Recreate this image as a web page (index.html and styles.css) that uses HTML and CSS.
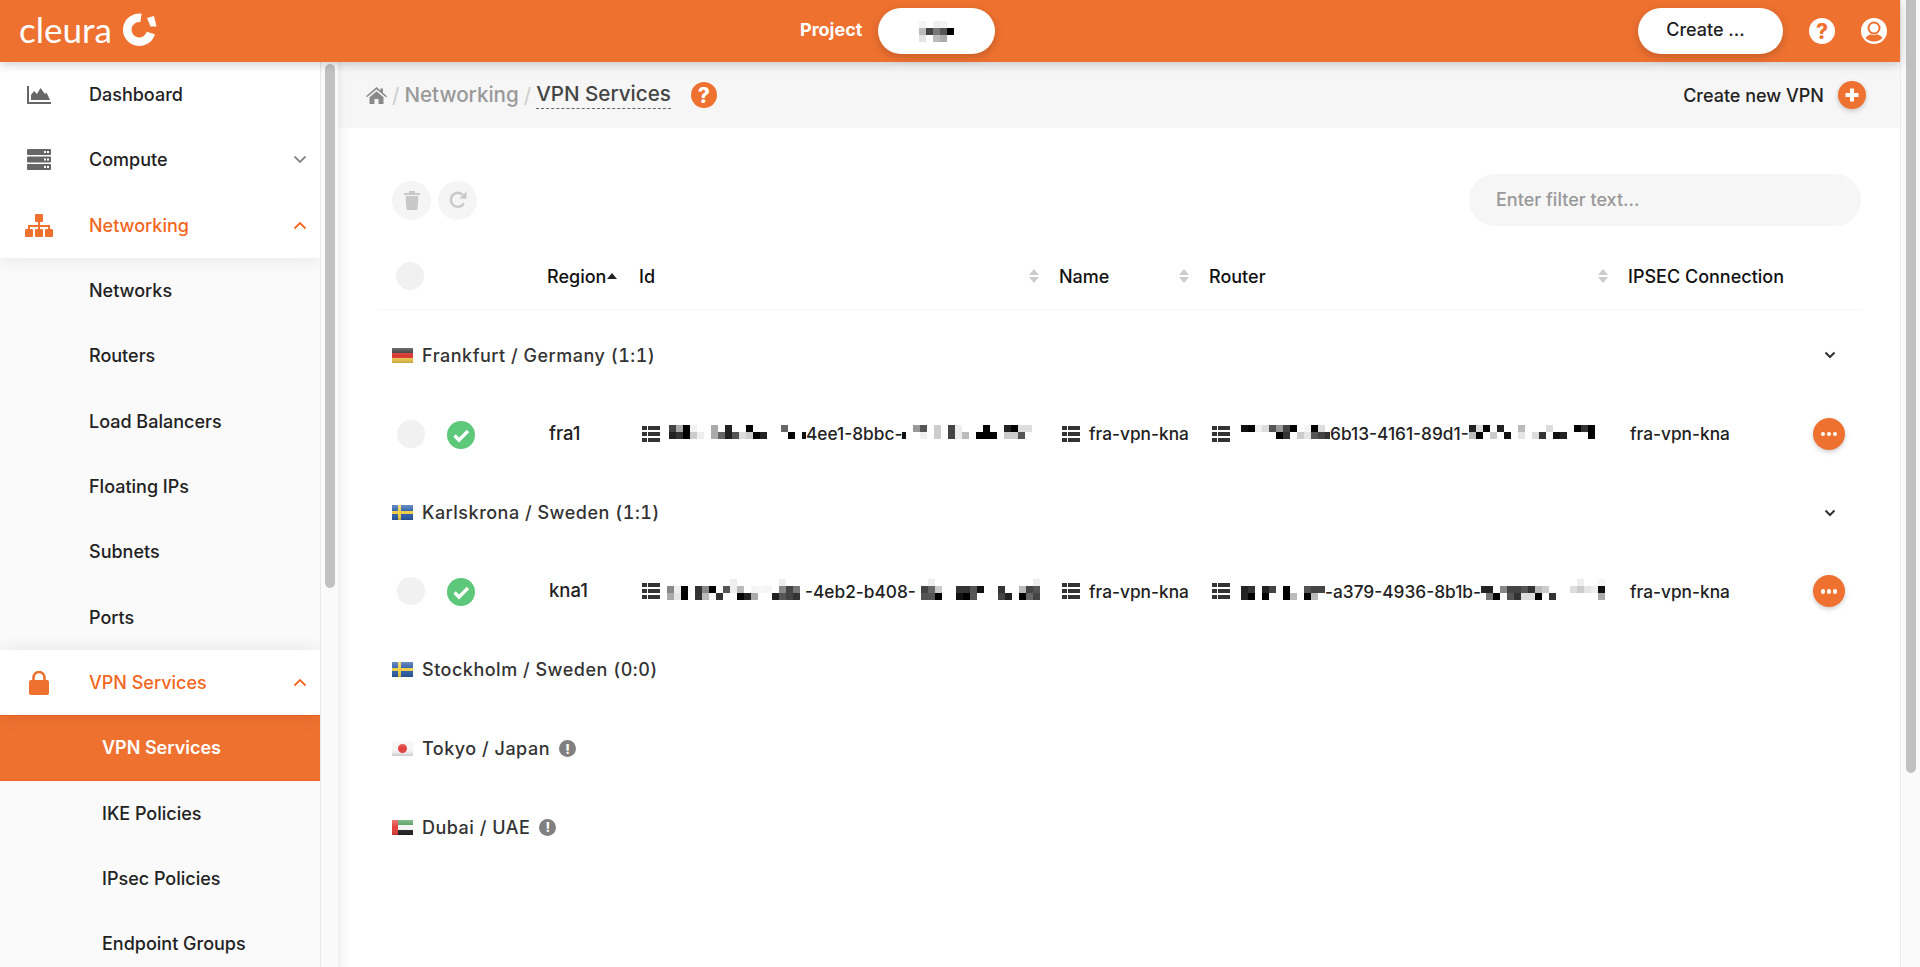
FILE: index.html
```html
<!DOCTYPE html>
<html>
<head>
    <title>Cleura - VPN Services</title>
    <meta charset="UTF-8">
    <link rel="stylesheet" href="styles.css">
</head>
<body>
<div class="page">
    <div class="app">
        <header class="topbar">
            <div class="brand">
                <span class="brand-name">cleura</span>
                <svg class="brand-mark" width="36" height="36" viewBox="0 0 36 36">
                    <path d="M20 5.900A12 12 0 1 0 29.800 21" fill="none" stroke="#fff" stroke-width="8.500"/>
                    <path d="M26 6L33 4L35.500 14.500L29.500 14.500Z" fill="#fff"/>
                </svg>
            </div>
            <div class="project">
                <span class="project-label">Project</span>
                <div class="pill project-pill">
                    <svg class="mosaic-small" width="35" height="21" viewBox="0 0 35 21">
                        <rect x="0" y="0" width="7" height="7" fill="#f4f4f4"/><rect x="14" y="0" width="7" height="7" fill="#f0f0f0"/><rect x="21" y="0" width="7" height="7" fill="#f4f4f4"/>
                        <rect x="0" y="7" width="7" height="7" fill="#bbb"/><rect x="7" y="7" width="7" height="7" fill="#444"/><rect x="14" y="7" width="7" height="7" fill="#777"/><rect x="21" y="7" width="7" height="7" fill="#555"/><rect x="28" y="7" width="7" height="7" fill="#000"/>
                        <rect x="0" y="14" width="7" height="7" fill="#e4e4e4"/><rect x="14" y="14" width="7" height="7" fill="#bbb"/><rect x="21" y="14" width="7" height="7" fill="#aaa"/>
                    </svg>
                </div>
            </div>
            <div class="topbar-right">
                <div class="pill create-pill"><span>Create ...</span></div>
                <span class="round-help light">?</span>
                <svg class="user-icon" width="26" height="26" viewBox="0 0 26 26">
                    <circle cx="13" cy="13" r="13" fill="#fff"/>
                    <circle cx="13" cy="10" r="5.500" fill="none" stroke="#ee7130" stroke-width="2"/>
                    <path d="M4.500 20C7 16.800 9.500 16.500 10.500 16.500C12 17.500 14 17.500 15.500 16.500C16.500 16.500 19 16.800 21.500 20C19.500 22 16.500 23.500 13 23.500C9.500 23.500 6.500 22 4.500 20Z" fill="#ee7130"/>
                </svg>
            </div>
        </header>

        <div class="layout">
            <aside class="sidebar">
                <div class="nav-group">
                    <a class="nav-item">
                        <span class="nav-icon">
                            <svg width="24" height="18" viewBox="0 0 24 18" fill="#666"><path d="M0 0h2v16h22v2H0z"/><path d="M4 14V9l3-4 3 3 3.500-6 4.500 6 1.500-1.500L23 14z"/></svg>
                        </span>
                        <span>Dashboard</span>
                    </a>
                    <a class="nav-item">
                        <span class="nav-icon">
                            <svg width="24" height="21" viewBox="0 0 24 21" fill="#666">
                                <path fill-rule="evenodd" d="M1 0h22a1 1 0 0 1 1 1v4a1 1 0 0 1-1 1H1a1 1 0 0 1-1-1V1a1 1 0 0 1 1-1zm16 2v2h2V2zm3 0v2h2V2zM1 7.500h22a1 1 0 0 1 1 1v4a1 1 0 0 1-1 1H1a1 1 0 0 1-1-1v-4a1 1 0 0 1 1-1zm16 2v2h2v-2zm3 0v2h2v-2zM1 15h22a1 1 0 0 1 1 1v4a1 1 0 0 1-1 1H1a1 1 0 0 1-1-1v-4a1 1 0 0 1 1-1zm16 2v2h2v-2zm3 0v2h2v-2z"/>
                            </svg>
                        </span>
                        <span>Compute</span>
                        <svg class="nav-chevron" width="14" height="9" viewBox="0 0 14 9"><path d="M1.500 1.500L7 7l5.500-5.500" fill="none" stroke="#888" stroke-width="1.800"/></svg>
                    </a>
                    <a class="nav-item open">
                        <span class="nav-icon">
                            <svg width="28" height="23" viewBox="0 0 28 23" fill="#ee7130">
                                <rect x="10" y="0" width="8" height="8" rx="1"/><rect x="0" y="15" width="8" height="8" rx="1"/><rect x="10" y="15" width="8" height="8" rx="1"/><rect x="20" y="15" width="8" height="8" rx="1"/>
                                <path d="M13 8h2v3h10v4h-2v-2h-8v2h-2v-2H5v2H3v-4h10z"/>
                            </svg>
                        </span>
                        <span>Networking</span>
                        <svg class="nav-chevron" width="14" height="9" viewBox="0 0 14 9"><path d="M1.500 7.500L7 2l5.500 5.500" fill="none" stroke="#f2671d" stroke-width="1.800"/></svg>
                    </a>
                </div>
                <a class="nav-sub">Networks</a>
                <a class="nav-sub">Routers</a>
                <a class="nav-sub">Load Balancers</a>
                <a class="nav-sub">Floating IPs</a>
                <a class="nav-sub">Subnets</a>
                <a class="nav-sub">Ports</a>
                <div class="nav-group">
                    <a class="nav-item open">
                        <span class="nav-icon">
                            <svg width="20" height="24" viewBox="0 0 20 24" fill="#ee7130">
                                <path d="M4.500 10V6.500a5.500 5.500 0 0 1 11 0V10" fill="none" stroke="#ee7130" stroke-width="2.600"/>
                                <rect x="0" y="9" width="20" height="15" rx="2"/>
                            </svg>
                        </span>
                        <span>VPN Services</span>
                        <svg class="nav-chevron" width="14" height="9" viewBox="0 0 14 9"><path d="M1.500 7.500L7 2l5.500 5.500" fill="none" stroke="#f2671d" stroke-width="1.800"/></svg>
                    </a>
                </div>
                <a class="nav-sub deep active">VPN Services</a>
                <a class="nav-sub deep">IKE Policies</a>
                <a class="nav-sub deep">IPsec Policies</a>
                <a class="nav-sub deep">Endpoint Groups</a>
            </aside>
            <div class="sidebar-track"><div class="sidebar-thumb"></div></div>

            <main class="main">
                <div class="crumbbar">
                    <svg class="home-icon" width="21" height="17" viewBox="0 0 21 17" fill="#8a8a8a">
                        <path d="M10.500 0L14.500 3.500V1.500H17V5.700L21 9.200L20 10.300L10.500 2.200L1 10.300L0 9.200Z"/>
                        <path d="M3.500 10.300L10.500 4.300L17.500 10.300V17H12.500V12H8.500V17H3.500Z"/>
                    </svg>
                    <span class="crumb-sep">/</span>
                    <span class="crumb">Networking</span>
                    <span class="crumb-sep">/</span>
                    <span class="crumb current">VPN Services</span>
                    <span class="round-help orange">?</span>
                    <div class="crumb-action">
                        <span>Create new VPN</span>
                        <span class="plus-button">
                            <svg width="16" height="16" viewBox="0 0 16 16"><path d="M8 1.500v13M1.500 8h13" stroke="#fff" stroke-width="4"/></svg>
                        </span>
                    </div>
                </div>

                <div class="content">
                    <div class="toolbar">
                        <div class="tool-buttons">
                            <span class="tool-button">
                                <svg width="16" height="19" viewBox="0 0 16 19" fill="#c8c8c8"><path d="M0 2h5V0h6v2h5v2H0z"/><path d="M1.500 5h13l-1 13a1 1 0 0 1-1 1h-9a1 1 0 0 1-1-1z"/></svg>
                            </span>
                            <span class="tool-button">
                                <svg width="18" height="18" viewBox="0 0 18 18"><path d="M14.800 12.500A7 7 0 1 1 14 4" fill="none" stroke="#c8c8c8" stroke-width="2.400"/><path d="M17.500 0.500V7.500H10.500Z" fill="#c8c8c8"/></svg>
                            </span>
                        </div>
                        <input class="filter" type="text" placeholder="Enter filter text...">
                    </div>

                    <div class="table-row table-head">
                        <div class="cell-check"><span class="check-dot"></span></div>
                        <div class="head-region">Region<i class="caret-up"></i></div>
                        <div class="head-cell">Id<i class="sorter"></i></div>
                        <div class="head-cell">Name<i class="sorter"></i></div>
                        <div class="head-cell">Router<i class="sorter"></i></div>
                        <div>IPSEC Connection</div>
                    </div>

                    <div class="group-list">
                        <div class="group-row">
                            <svg class="flag" width="21" height="15" viewBox="0 0 21 15">
                                <defs>
                                    <linearGradient id="gloss" x1="0" y1="0" x2="0" y2="1">
                                        <stop offset="0" stop-color="#fff" stop-opacity="0.3"/>
                                        <stop offset="0.5" stop-color="#fff" stop-opacity="0"/>
                                        <stop offset="1" stop-color="#000" stop-opacity="0.18"/>
                                    </linearGradient>
                                </defs>
                                <rect width="21" height="5" fill="#333"/><rect y="5" width="21" height="5" fill="#d6392f"/><rect y="10" width="21" height="5" fill="#edc84b"/><rect width="21" height="15" fill="url(#gloss)"/>
                            </svg>
                            <span>Frankfurt / Germany (1:1)</span>
                            <svg class="group-chevron" width="12" height="8" viewBox="0 0 12 8"><path d="M1.500 1.500L6 6l4.500-4.500" fill="none" stroke="#333" stroke-width="2"/></svg>
                        </div>

                        <div class="table-row data-row">
                            <div class="cell-check">
                                <span class="check-dot"></span>
                                <svg class="status-ok" width="28" height="28" viewBox="0 0 28 28"><circle cx="14" cy="14" r="14" fill="#5dc77a"/><path d="M7.500 14.500l4.500 4.500 9-9" fill="none" stroke="#fff" stroke-width="3.400"/></svg>
                            </div>
                            <div class="cell-region">fra1</div>
                            <div class="cell-data">
                                <svg class="list-icon" width="18" height="16" viewBox="0 0 18 16" fill="#333"><rect width="5" height="4"/><rect x="6" width="12" height="4"/><rect y="6" width="5" height="4"/><rect x="6" y="6" width="12" height="4"/><rect y="12" width="5" height="4"/><rect x="6" y="12" width="12" height="4"/></svg>
                                <svg class="mosaic" width="139" height="28" viewBox="-2 0 139 28">
                                    <rect x="0" fill="#444"/><rect x="7" fill="#aaa"/><rect x="14" fill="#000"/><rect x="21" fill="#f2f2f2"/><rect x="42" fill="#aaa"/><rect x="56" fill="#222"/><rect x="77" fill="#000"/><rect x="112" fill="#666"/>
                                    <rect class="b" x="0" fill="#222"/><rect class="b" x="7" fill="#333"/><rect class="b" x="14" fill="#000"/><rect class="b" x="21" fill="#ccc"/><rect class="b" x="28" fill="#eee"/><rect class="b" x="42" fill="#aaa"/><rect class="b" x="49" fill="#666"/><rect class="b" x="56" fill="#222"/><rect class="b" x="63" fill="#555"/><rect class="b" x="70" fill="#ddd"/><rect class="b" x="77" fill="#ccc"/><rect class="b" x="84" fill="#000"/><rect class="b" x="91" fill="#222"/><rect class="b" x="119" fill="#000"/><rect class="b" x="133" fill="#111"/>
                                </svg>
                                <span>4ee1-8bbc-</span>
                                <svg class="mosaic" width="130" height="28" viewBox="0 0 130 28">
                                    <rect x="11" fill="#999"/><rect x="18" fill="#555"/><rect x="32" fill="#ccc"/><rect x="46" fill="#444"/><rect x="53" fill="#eee"/><rect x="81" fill="#000"/><rect x="102" fill="#222"/><rect x="109" fill="#000"/><rect x="116" fill="#ddd"/><rect x="123" fill="#ddd"/>
                                    <rect class="b" x="-3" fill="#111"/><rect class="b" x="18" fill="#f0f0f0"/><rect class="b" x="32" fill="#ccc"/><rect class="b" x="46" fill="#444"/><rect class="b" x="53" fill="#eee"/><rect class="b" x="60" fill="#bbb"/><rect class="b" x="74" fill="#000"/><rect class="b" x="81" fill="#000"/><rect class="b" x="88" fill="#000"/><rect class="b" x="102" fill="#ccc"/><rect class="b" x="109" fill="#ccc"/><rect class="b" x="116" fill="#555"/>
                                </svg>
                            </div>
                            <div class="cell-data">
                                <svg class="list-icon" width="18" height="16" viewBox="0 0 18 16" fill="#333"><rect width="5" height="4"/><rect x="6" width="12" height="4"/><rect y="6" width="5" height="4"/><rect x="6" y="6" width="12" height="4"/><rect y="12" width="5" height="4"/><rect x="6" y="12" width="12" height="4"/></svg>
                                <span class="name-text">fra-vpn-kna</span>
                            </div>
                            <div class="cell-data">
                                <svg class="list-icon" width="18" height="16" viewBox="0 0 18 16" fill="#333"><rect width="5" height="4"/><rect x="6" width="12" height="4"/><rect y="6" width="5" height="4"/><rect x="6" y="6" width="12" height="4"/><rect y="12" width="5" height="4"/><rect x="6" y="12" width="12" height="4"/></svg>
                                <svg class="mosaic" width="93" height="28" viewBox="-4 0 93 28">
                                    <rect x="0" fill="#111"/><rect x="7" fill="#000"/><rect x="14" fill="#eee"/><rect x="21" fill="#ddd"/><rect x="28" fill="#555"/><rect x="35" fill="#999"/><rect x="42" fill="#444"/><rect x="49" fill="#000"/><rect x="63" fill="#f5f5f5"/><rect x="70" fill="#000"/><rect x="77" fill="#ddd"/>
                                    <rect class="b" x="35" fill="#000"/><rect class="b" x="42" fill="#333"/><rect class="b" x="56" fill="#ccc"/><rect class="b" x="63" fill="#e5e5e5"/><rect class="b" x="70" fill="#555"/><rect class="b" x="77" fill="#444"/><rect class="b" x="84" fill="#333"/>
                                </svg>
                                <span>6b13-4161-89d1-</span>
                                <svg class="mosaic" width="126" height="28" viewBox="0 0 126 28">
                                    <rect x="0" fill="#222"/><rect x="7" fill="#ddd"/><rect x="14" fill="#000"/><rect x="28" fill="#222"/><rect x="49" fill="#bbb"/><rect x="77" fill="#ddd"/><rect x="105" fill="#000"/><rect x="112" fill="#333"/><rect x="119" fill="#000"/>
                                    <rect class="b" x="0" fill="#bbb"/><rect class="b" x="7" fill="#000"/><rect class="b" x="21" fill="#ccc"/><rect class="b" x="35" fill="#111"/><rect class="b" x="49" fill="#e5e5e5"/><rect class="b" x="63" fill="#ddd"/><rect class="b" x="70" fill="#333"/><rect class="b" x="84" fill="#111"/><rect class="b" x="91" fill="#222"/><rect class="b" x="119" fill="#000"/>
                                </svg>
                            </div>
                            <div class="cell-last">
                                <span>fra-vpn-kna</span>
                                <span class="more-button"><i></i><i></i><i></i></span>
                            </div>
                        </div>

                        <div class="group-row">
                            <svg class="flag" width="21" height="15" viewBox="0 0 21 15"><rect width="21" height="15" fill="#2b5da8"/><rect x="6" width="3" height="15" fill="#f0cd45"/><rect y="6" width="21" height="3" fill="#f0cd45"/><rect width="21" height="15" fill="url(#gloss)"/></svg>
                            <span>Karlskrona / Sweden (1:1)</span>
                            <svg class="group-chevron" width="12" height="8" viewBox="0 0 12 8"><path d="M1.500 1.500L6 6l4.500-4.500" fill="none" stroke="#333" stroke-width="2"/></svg>
                        </div>

                        <div class="table-row data-row">
                            <div class="cell-check">
                                <span class="check-dot"></span>
                                <svg class="status-ok" width="28" height="28" viewBox="0 0 28 28"><circle cx="14" cy="14" r="14" fill="#5dc77a"/><path d="M7.500 14.500l4.500 4.500 9-9" fill="none" stroke="#fff" stroke-width="3.400"/></svg>
                            </div>
                            <div class="cell-region">kna1</div>
                            <div class="cell-data">
                                <svg class="list-icon" width="18" height="16" viewBox="0 0 18 16" fill="#333"><rect width="5" height="4"/><rect x="6" width="12" height="4"/><rect y="6" width="5" height="4"/><rect x="6" y="6" width="12" height="4"/><rect y="12" width="5" height="4"/><rect x="6" y="12" width="12" height="4"/></svg>
                                <svg class="mosaic low" width="138" height="28" viewBox="0 0 138 28">
                                    <rect class="a" x="63" fill="#eee"/><rect class="a" x="112" fill="#eee"/>
                                    <rect x="0" fill="#888"/><rect x="7" fill="#eee"/><rect x="14" fill="#000"/><rect x="28" fill="#333"/><rect x="35" fill="#888"/><rect x="42" fill="#000"/><rect x="56" fill="#555"/><rect x="63" fill="#eee"/><rect x="70" fill="#bbb"/><rect x="84" fill="#f5f5f5"/><rect x="91" fill="#f8f8f8"/><rect x="98" fill="#f5f5f5"/><rect x="112" fill="#888"/><rect x="119" fill="#444"/><rect x="126" fill="#777"/>
                                    <rect class="b" x="0" fill="#aaa"/><rect class="b" x="7" fill="#e5e5e5"/><rect class="b" x="14" fill="#000"/><rect class="b" x="28" fill="#333"/><rect class="b" x="35" fill="#bbb"/><rect class="b" x="42" fill="#f5f5f5"/><rect class="b" x="49" fill="#333"/><rect class="b" x="70" fill="#000"/><rect class="b" x="77" fill="#222"/><rect class="b" x="84" fill="#aaa"/><rect class="b" x="105" fill="#222"/><rect class="b" x="112" fill="#555"/><rect class="b" x="119" fill="#444"/><rect class="b" x="126" fill="#333"/>
                                </svg>
                                <span>-4eb2-b408-</span>
                                <svg class="mosaic low" width="124" height="28" viewBox="-5 0 124 28">
                                    <rect class="a" x="7" fill="#eee"/><rect class="a" x="112" fill="#eee"/>
                                    <rect x="0" fill="#444"/><rect x="7" fill="#666"/><rect x="14" fill="#ccc"/><rect x="35" fill="#333"/><rect x="42" fill="#333"/><rect x="49" fill="#555"/><rect x="56" fill="#111"/><rect x="77" fill="#333"/><rect x="98" fill="#bbb"/><rect x="105" fill="#444"/><rect x="112" fill="#555"/>
                                    <rect class="b" x="0" fill="#555"/><rect class="b" x="7" fill="#555"/><rect class="b" x="14" fill="#000"/><rect class="b" x="35" fill="#111"/><rect class="b" x="42" fill="#000"/><rect class="b" x="49" fill="#555"/><rect class="b" x="77" fill="#444"/><rect class="b" x="84" fill="#222"/><rect class="b" x="98" fill="#000"/><rect class="b" x="105" fill="#666"/><rect class="b" x="112" fill="#444"/>
                                </svg>
                            </div>
                            <div class="cell-data">
                                <svg class="list-icon" width="18" height="16" viewBox="0 0 18 16" fill="#333"><rect width="5" height="4"/><rect x="6" width="12" height="4"/><rect y="6" width="5" height="4"/><rect x="6" y="6" width="12" height="4"/><rect y="12" width="5" height="4"/><rect x="6" y="12" width="12" height="4"/></svg>
                                <span class="name-text">fra-vpn-kna</span>
                            </div>
                            <div class="cell-data">
                                <svg class="list-icon" width="18" height="16" viewBox="0 0 18 16" fill="#333"><rect width="5" height="4"/><rect x="6" width="12" height="4"/><rect y="6" width="5" height="4"/><rect x="6" y="6" width="12" height="4"/><rect y="12" width="5" height="4"/><rect x="6" y="12" width="12" height="4"/></svg>
                                <svg class="mosaic low" width="88" height="28" viewBox="-4 0 88 28">
                                    <rect x="0" fill="#222"/><rect x="7" fill="#333"/><rect x="21" fill="#222"/><rect x="28" fill="#444"/><rect x="42" fill="#000"/><rect x="63" fill="#555"/><rect x="70" fill="#444"/><rect x="77" fill="#444"/>
                                    <rect class="b" x="0" fill="#222"/><rect class="b" x="7" fill="#000"/><rect class="b" x="21" fill="#000"/><rect class="b" x="42" fill="#000"/><rect class="b" x="49" fill="#bbb"/><rect class="b" x="63" fill="#000"/><rect class="b" x="70" fill="#bbb"/>
                                </svg>
                                <span>-a379-4936-8b1b-</span>
                                <svg class="mosaic low" width="124" height="28" viewBox="6 0 124 28">
                                    <rect class="a" x="102" fill="#eee"/><rect class="a" x="123" fill="#f5f5f5"/>
                                    <rect x="4" fill="#222"/><rect x="11" fill="#222"/><rect x="25" fill="#888"/><rect x="32" fill="#444"/><rect x="39" fill="#444"/><rect x="46" fill="#555"/><rect x="53" fill="#333"/><rect x="60" fill="#bbb"/><rect x="67" fill="#ccc"/><rect x="95" fill="#ddd"/><rect x="102" fill="#ccc"/><rect x="109" fill="#e5e5e5"/><rect x="116" fill="#eee"/><rect x="123" fill="#111"/>
                                    <rect class="b" x="11" fill="#777"/><rect class="b" x="18" fill="#000"/><rect class="b" x="32" fill="#555"/><rect class="b" x="39" fill="#333"/><rect class="b" x="46" fill="#ddd"/><rect class="b" x="53" fill="#ddd"/><rect class="b" x="60" fill="#000"/><rect class="b" x="74" fill="#333"/><rect class="b" x="123" fill="#aaa"/>
                                </svg>
                            </div>
                            <div class="cell-last">
                                <span>fra-vpn-kna</span>
                                <span class="more-button"><i></i><i></i><i></i></span>
                            </div>
                        </div>

                        <div class="group-row">
                            <svg class="flag" width="21" height="15" viewBox="0 0 21 15"><rect width="21" height="15" fill="#2b5da8"/><rect x="6" width="3" height="15" fill="#f0cd45"/><rect y="6" width="21" height="3" fill="#f0cd45"/><rect width="21" height="15" fill="url(#gloss)"/></svg>
                            <span>Stockholm / Sweden (0:0)</span>
                        </div>
                        <div class="group-row">
                            <svg class="flag" width="21" height="15" viewBox="0 0 21 15"><rect width="21" height="15" fill="#f6f6f6"/><circle cx="10.500" cy="7.500" r="4.500" fill="#e2403c"/><rect width="21" height="15" fill="url(#gloss)"/></svg>
                            <span>Tokyo / Japan</span>
                            <span class="alert-dot">!</span>
                        </div>
                        <div class="group-row">
                            <svg class="flag" width="21" height="15" viewBox="0 0 21 15"><rect width="21" height="5" fill="#4f9c5c"/><rect y="5" width="21" height="5" fill="#f4f4f4"/><rect y="10" width="21" height="5" fill="#222"/><rect width="6" height="15" fill="#e2403c"/><rect width="21" height="15" fill="url(#gloss)"/></svg>
                            <span>Dubai / UAE</span>
                            <span class="alert-dot">!</span>
                        </div>
                    </div>
                </div>
            </main>
        </div>
    </div>
    <div class="page-track"><div class="page-thumb"></div></div>
</div>
</body>
</html>
```

FILE: styles.css
```css
* {
    box-sizing: border-box;
}
html, body {
    margin: 0;
    height: 100%;
    overflow: hidden;
}
body {
    background: #fff;
    color: #222;
    font-family: Inter, "Noto Sans", sans-serif;
    font-size: 18px;
    font-weight: 450;
}
.page {
    display: flex;
    height: 967px;
}
.app {
    flex: 1;
    min-width: 0;
    display: flex;
    flex-direction: column;
}
.page-track {
    width: 20px;
    padding: 0 4px 0 5px;
    border-left: 1px solid #ececec;
    background: #fafafa;
}
.page-thumb {
    height: 773px;
    background: #c1c1c1;
    border-radius: 0 0 5px 5px;
}

/* header */
.topbar {
    height: 62px;
    flex: none;
    display: flex;
    align-items: center;
    background: #ee7130;
    box-shadow: 0 2px 10px rgba(0,0,0,0.2);
    position: relative;
    z-index: 3;
}
.brand {
    width: 800px;
    display: flex;
    align-items: center;
    padding-left: 19px;
}
.brand-name {
    color: #fff;
    font-family: Lato, sans-serif;
    font-weight: 400;
    font-size: 35px;
    line-height: 1;
    margin-bottom: 4px;
}
.brand-mark {
    margin: 0 0 2px 9px;
}
.project {
    display: flex;
    align-items: center;
}
.project-label {
    color: #fff;
    font-weight: 700;
    width: 78px;
    margin-bottom: 3px;
}
.pill {
    height: 46px;
    border-radius: 23px;
    background: #fff;
    display: flex;
    align-items: center;
    justify-content: center;
    box-shadow: 0 3px 10px rgba(0,0,0,0.18);
}
.project-pill {
    width: 117px;
}
.topbar-right {
    margin-left: auto;
    display: flex;
    align-items: center;
    padding-right: 13px;
}
.create-pill {
    width: 145px;
    padding: 0 10px 3px 0;
    color: #222;
}
.round-help {
    width: 26px;
    height: 26px;
    border-radius: 50%;
    display: flex;
    align-items: center;
    justify-content: center;
    font-weight: 800;
    font-size: 21px;
    line-height: 1;
}
.round-help.light {
    background: #fff;
    color: #ee7130;
    margin-left: 26px;
}
.round-help.orange {
    background: #ee7130;
    color: #fff;
    margin-left: 20px;
}
.user-icon {
    margin-left: 26px;
}

.layout {
    flex: 1;
    min-height: 0;
    display: flex;
}

/* sidebar */
.sidebar {
    width: 321px;
    flex: none;
    overflow: hidden;
    background: #fafafa;
    border-right: 1px solid #e8e8e8;
}
.nav-group {
    background: #fff;
    box-shadow: 0 0 18px rgba(0,0,0,0.09);
    position: relative;
}
.nav-item {
    height: 65.33px;
    display: flex;
    align-items: center;
    color: #222;
    padding-right: 13px;
}
.nav-item.open {
    color: #f2671d;
}
.nav-icon {
    width: 78px;
    margin-right: 11px;
    display: flex;
    justify-content: center;
}
.nav-chevron {
    margin-left: auto;
}
.nav-sub {
    display: flex;
    align-items: center;
    height: 65.33px;
    padding-left: 89px;
    color: #222;
}
.nav-sub.deep {
    padding-left: 102px;
}
.nav-sub.active {
    background: #ee7130;
    color: #fff;
    font-weight: 600;
    border-top: 1px solid #f2671d;
    border-bottom: 1px solid #f2671d;
}
.sidebar-track {
    width: 17px;
    flex: none;
    padding: 2px 3px 0 4px;
    background: #fafafa;
}
.sidebar-thumb {
    height: 524px;
    background: #c1c1c1;
    border-radius: 5px;
}

/* main */
.main {
    flex: 1;
    min-width: 0;
    box-shadow: inset 14px 0 14px -14px rgba(0,0,0,0.12);
}
.crumbbar {
    height: 66px;
    padding: 0 34px 0 28px;
    display: flex;
    align-items: center;
    background: #f6f6f6;
    box-shadow: inset 8px 0 8px -8px rgba(0,0,0,0.1);
    font-size: 20.6px;
}
.crumb {
    color: #999;
    margin-bottom: 1px;
}
.crumb.current {
    color: #444;
    line-height: 28px;
    border-bottom: 1px dashed #666;
}
.crumb-sep {
    color: #ccc;
    font-weight: 400;
    margin: 0 5px;
}
.crumb-action {
    margin-left: auto;
    display: flex;
    align-items: center;
    font-size: 18px;
    color: #222;
}
.plus-button {
    width: 28px;
    height: 28px;
    margin-left: 14px;
    border-radius: 50%;
    background: #ee7130;
    display: flex;
    align-items: center;
    justify-content: center;
    box-shadow: 0 2px 5px rgba(0,0,0,0.2);
}
.content {
    padding: 46px 39px 0 40px;
}
.toolbar {
    height: 52px;
    display: flex;
    align-items: center;
    justify-content: space-between;
}
.tool-buttons {
    display: flex;
    gap: 7px;
    padding-left: 14px;
}
.tool-button {
    width: 39px;
    height: 39px;
    border-radius: 50%;
    background: #f5f5f5;
    display: flex;
    align-items: center;
    justify-content: center;
}
.filter {
    width: 392px;
    height: 52px;
    border: none;
    border-radius: 26px;
    background: #f6f6f6;
    padding: 0 27px 2px;
    font: inherit;
    outline: none;
}
.filter::placeholder {
    color: #999;
    opacity: 1;
}

/* table */
.table-row {
    display: grid;
    grid-template-columns: 169px 92px 420px 150px 419px 233px;
    align-items: center;
}
.table-head {
    margin-top: 16px;
    height: 68px;
    padding-top: 1px;
    border-bottom: 1px solid #f6f6f6;
    color: #111;
}
.cell-check {
    display: flex;
    align-items: center;
    padding-left: 18px;
}
.check-dot {
    width: 28px;
    height: 28px;
    border-radius: 50%;
    background: #f1f1f1;
    flex: none;
}
.data-row .cell-check {
    padding-left: 19px;
}
.status-ok {
    margin: 2px 0 0 22px;
}
.head-region {
    display: flex;
    align-items: center;
}
.caret-up {
    width: 0;
    height: 0;
    margin-left: 1px;
    border-left: 5.5px solid transparent;
    border-right: 5.5px solid transparent;
    border-bottom: 6px solid #222;
}
.head-cell {
    display: flex;
    align-items: center;
    justify-content: space-between;
    padding-right: 20px;
}
.sorter {
    width: 10px;
    height: 14px;
    background: #ccc;
    clip-path: polygon(50% 0, 100% 6px, 0 6px, 0 8px, 100% 8px, 50% 14px, 0 8px, 0 6px);
}
.group-list {
    margin-top: 6px;
}
.group-row {
    height: 78.67px;
    display: flex;
    align-items: center;
    padding: 0 25px 0 14px;
    color: #333;
    letter-spacing: 0.5px;
    font-variant-numeric: tabular-nums;
}
.flag {
    margin-right: 9px;
    flex: none;
}
.group-chevron {
    margin-left: auto;
}
.alert-dot {
    width: 17px;
    height: 17px;
    margin-left: 9px;
    border-radius: 50%;
    background: #808080;
    color: #fff;
    font-size: 13px;
    font-weight: 800;
    letter-spacing: 0;
    display: flex;
    align-items: center;
    justify-content: center;
}
.data-row {
    height: 78.67px;
    color: #222;
    font-size: 17.3px;
    white-space: nowrap;
}
.cell-region {
    padding-left: 2px;
    padding-bottom: 2px;
    font-size: 18.5px;
}
.cell-data {
    display: flex;
    align-items: center;
    padding-left: 3px;
}
.list-icon {
    flex: none;
    margin-right: 7px;
}
.name-text {
    margin-left: 2px;
}
.mosaic {
    flex: none;
    shape-rendering: crispEdges;
}
.mosaic rect {
    width: 7px;
    height: 7px;
    y: 5px;
}
.mosaic rect.b {
    y: 12px;
}
.mosaic.low rect {
    y: 9px;
}
.mosaic.low rect.b {
    y: 16px;
}
.mosaic.low rect.a {
    y: 2px;
}
.mosaic-small {
    shape-rendering: crispEdges;
}
.cell-last {
    display: flex;
    align-items: center;
    justify-content: space-between;
    padding: 0 16px 0 2px;
}
.more-button {
    width: 32px;
    height: 32px;
    border-radius: 50%;
    background: #ee7130;
    display: flex;
    align-items: center;
    justify-content: center;
    gap: 1.5px;
    box-shadow: 0 2px 5px rgba(0,0,0,0.2);
}
.more-button i {
    width: 4.5px;
    height: 4.5px;
    border-radius: 50%;
    background: #fff;
}
```
